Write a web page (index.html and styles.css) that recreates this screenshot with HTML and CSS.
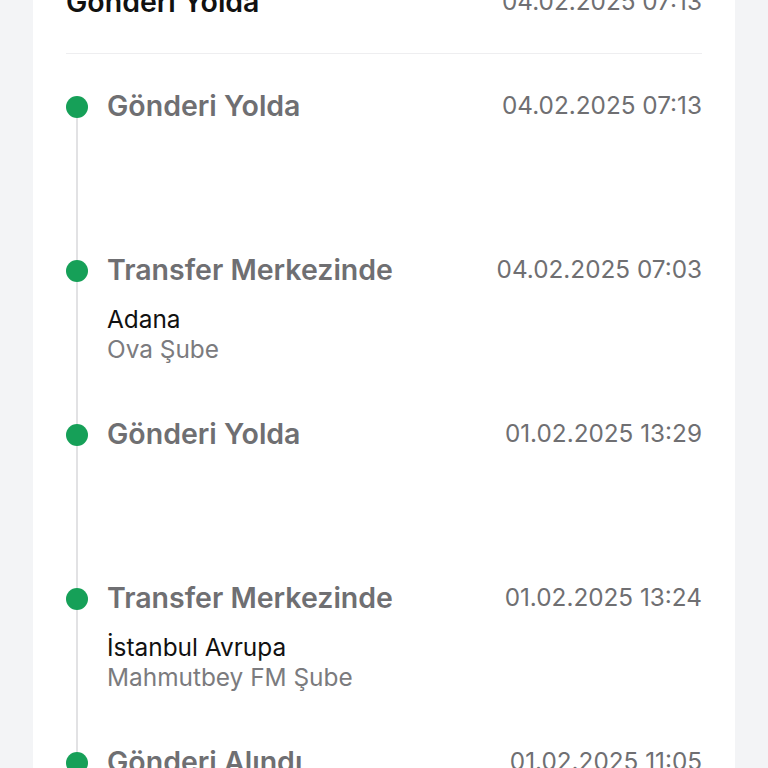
FILE: index.html
```html
<!DOCTYPE html>
<html lang="tr">
<head>
  <meta charset="UTF-8">
  <meta name="viewport" content="width=device-width, initial-scale=1.0">
  <title>Gönderi Takibi</title>
  <link rel="stylesheet" href="styles.css">
</head>
<body>
  <div class="card">
    <div class="card-header">
      <h2>Gönderi Yolda</h2>
      <span class="date">04.02.2025 07:13</span>
    </div>

    <ul class="timeline">
      <li class="step">
        <div class="rail"><span class="dot"></span></div>
        <div class="step-body">
          <div class="step-head">
            <h3>Gönderi Yolda</h3>
            <span class="date">04.02.2025 07:13</span>
          </div>
        </div>
      </li>
      <li class="step">
        <div class="rail"><span class="dot"></span></div>
        <div class="step-body">
          <div class="step-head">
            <h3>Transfer Merkezinde</h3>
            <span class="date">04.02.2025 07:03</span>
          </div>
          <p class="city">Adana</p>
          <p class="branch">Ova Şube</p>
        </div>
      </li>
      <li class="step">
        <div class="rail"><span class="dot"></span></div>
        <div class="step-body">
          <div class="step-head">
            <h3>Gönderi Yolda</h3>
            <span class="date">01.02.2025 13:29</span>
          </div>
        </div>
      </li>
      <li class="step">
        <div class="rail"><span class="dot"></span></div>
        <div class="step-body">
          <div class="step-head">
            <h3>Transfer Merkezinde</h3>
            <span class="date">01.02.2025 13:24</span>
          </div>
          <p class="city">İstanbul Avrupa</p>
          <p class="branch">Mahmutbey FM Şube</p>
        </div>
      </li>
      <li class="step">
        <div class="rail"><span class="dot"></span></div>
        <div class="step-body">
          <div class="step-head">
            <h3>Gönderi Alındı</h3>
            <span class="date">01.02.2025 11:05</span>
          </div>
        </div>
      </li>
    </ul>
  </div>
</body>
</html>
```

FILE: styles.css
```css
:root {
  --page-bg: #f3f4f6;
  --card-bg: #ffffff;
  --green: #16a058;
  --line: #e2e2e4;
  --muted: #6f6f72;
  --text: #111111;
}

body {
  margin: 0;
  padding: 0;
  background: var(--page-bg);
  font-family: 'Inter', 'Noto Sans', sans-serif;
  color: var(--text);
  overflow: hidden;
}

.card {
  width: 636px;
  margin: -17px 0 0 33px;
  padding: 0 33px;
  background: var(--card-bg);
}

.card-header {
  display: flex;
  justify-content: space-between;
  align-items: center;
  height: 36px;
  padding-bottom: 34px;
  border-bottom: 1px solid #eeeef0;
}

.card-header h2 {
  margin: 0;
  font-size: 28.5px;
  font-weight: 600;
  color: var(--text);
}

.date {
  font-size: 24.3px;
  color: var(--muted);
}

.timeline {
  list-style: none;
  margin: 0;
  padding: 0;
}

.step {
  display: flex;
  gap: 19px;
  height: 164px;
}

.rail {
  width: 22px;
  flex-shrink: 0;
  background: linear-gradient(var(--line), var(--line)) center / 2px 100% no-repeat;
}

.step:first-child .rail {
  background-position: center 53px;
}

.dot {
  display: block;
  width: 22px;
  height: 22px;
  margin-top: 42px;
  border-radius: 50%;
  background: var(--green);
}

.step-body {
  flex: 1;
  padding-top: 35px;
}

.step-head {
  display: flex;
  justify-content: space-between;
  align-items: center;
  height: 32px;
}

.step-head h3 {
  margin: 0;
  font-size: 28.5px;
  font-weight: 600;
  color: var(--muted);
}

.city,
.branch {
  margin: 0;
  font-size: 24.4px;
  line-height: 30px;
}

.city {
  margin-top: 19px;
  color: var(--text);
}

.branch {
  color: #7b7b7e;
}
```
